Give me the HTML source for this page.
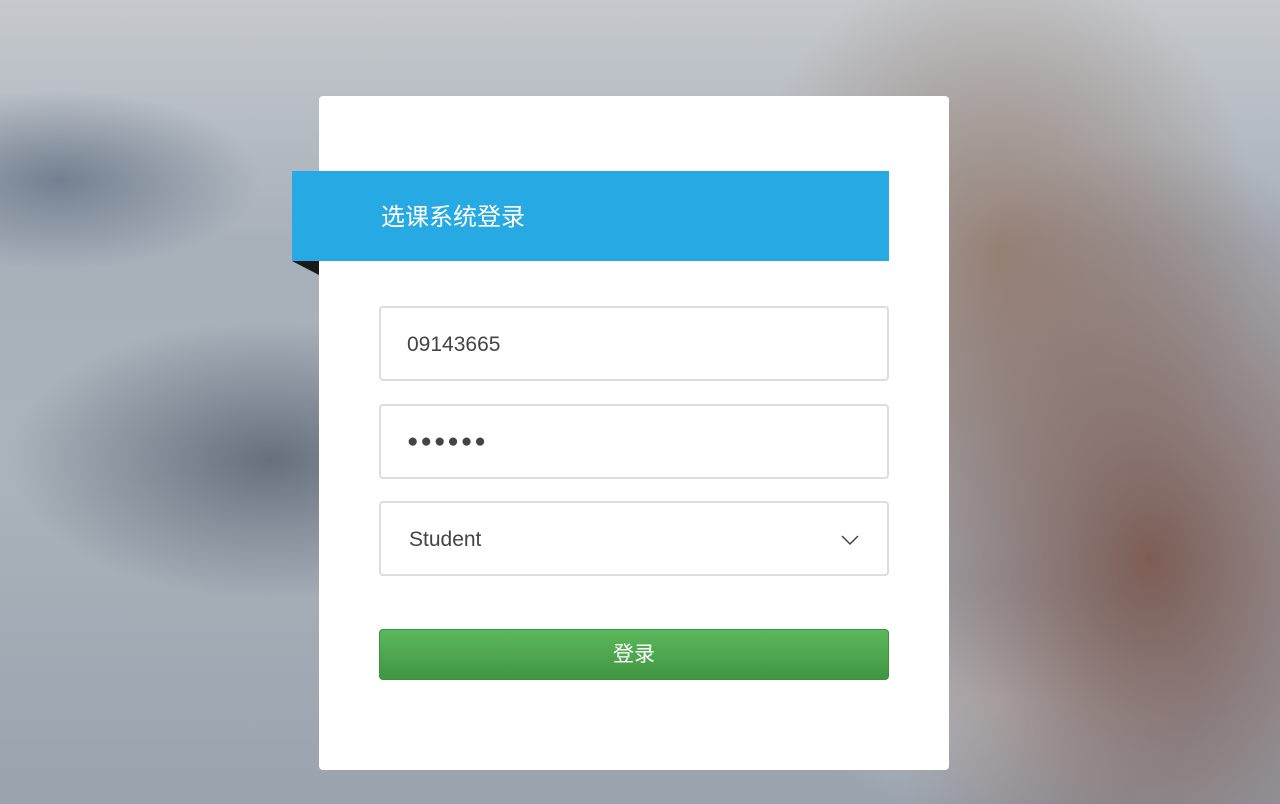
<!DOCTYPE html>
<html><head><meta charset="utf-8"><style>
html,body{margin:0;width:1280px;height:804px;overflow:hidden;font-family:"Liberation Sans","Noto Sans CJK SC",sans-serif}
.bg{position:absolute;inset:0;background:
radial-gradient(ellipse 260px 140px at 270px 460px,rgba(80,90,105,.75),transparent),
radial-gradient(ellipse 200px 90px at 60px 180px,rgba(90,105,125,.7),transparent),
radial-gradient(ellipse 300px 420px at 1150px 560px,rgba(120,85,75,.9),transparent),
radial-gradient(ellipse 260px 300px at 1000px 250px,rgba(150,125,110,.85),transparent),
radial-gradient(ellipse 200px 120px at 1000px 700px,rgba(200,205,210,.8),transparent),
linear-gradient(180deg,#c5c9cd 0%,#a8b0ba 30%,#aab2bb 60%,#9aa3ae 100%);}
.card{position:absolute;left:319px;top:96px;width:630px;height:674px;background:#fff;border-radius:4px}
.banner{position:absolute;left:292px;top:171px;width:597px;height:90px;background:#27a9e3;color:#fff;font-size:24px;line-height:94px;box-sizing:border-box;padding-left:89px}
.fold{position:absolute;left:292px;top:261px;width:0;height:0;border-top:14px solid #1a1a1a;border-left:27px solid transparent}
.inp{position:absolute;left:379px;width:510px;height:75px;box-sizing:border-box;border:2px solid #ddd;border-radius:4px;background:#fff;color:#444;font-size:21px;line-height:73px;padding-left:26px}
.btn{position:absolute;left:379px;top:629px;width:510px;height:51px;box-sizing:border-box;border:1px solid #3e8f3e;border-radius:4px;background:linear-gradient(#5cb85c,#419641);color:#fff;font-size:21px;text-align:center;line-height:50px}
</style></head><body>
<div class="bg"></div>
<div class="card"></div>
<div class="banner">选课系统登录</div>
<div class="fold"></div>
<div class="inp" style="top:306px">09143665</div>
<div class="inp" style="top:404px;font-size:19px;letter-spacing:2px;line-height:72px">●●●●●●</div>
<div class="inp" style="top:501px;padding-left:28px">Student
<svg style="position:absolute;right:28px;top:31px" width="18" height="12" viewBox="0 0 18 12"><path d="M1 2 L9 10 L17 2" fill="none" stroke="#444" stroke-width="1.5"/></svg></div>
<div class="btn">登录</div>
</body></html>
